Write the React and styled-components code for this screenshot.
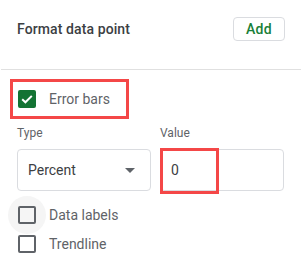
import React from "react";
import styled, { createGlobalStyle } from "styled-components";

const Global = createGlobalStyle`
  html, body { margin: 0; padding: 0; background: #fff; }
  body { font-family: Roboto, "Noto Sans", Arial, sans-serif; color: #3c4043; }
`;

const Panel = styled.div`
  width: 301px;
  height: 278px;
  box-sizing: border-box;
  background: #fff;
`;

const Header = styled.div`
  height: 69px;
  box-sizing: border-box;
  padding: 17px 16px 0 17px;
  display: flex;
  justify-content: space-between;
  align-items: flex-start;
`;

const Title = styled.div`
  font-size: 14px;
  font-weight: 500;
  line-height: 24px;
  color: #3c4043;
  letter-spacing: 0.1px;
`;

const AddButton = styled.button`
  width: 52px;
  height: 24px;
  box-sizing: border-box;
  border: 1px solid #dadce0;
  border-radius: 4px;
  background: #fff;
  color: #188038;
  font-family: Roboto, Arial, sans-serif;
  font-size: 14px;
  font-weight: 500;
  padding: 0;
  letter-spacing: 0.3px;
`;

const Divider = styled.div`
  height: 1px;
  background: #e0e0e0;
  margin-left: 1px;
`;

const Highlight = styled.div`
  border: 3px solid #f44747;
  box-sizing: border-box;
`;

const ErrorBarsBox = styled(Highlight)`
  margin: 9px 0 0 10px;
  width: 119px;
  height: 40px;
  display: flex;
  align-items: center;
  padding-left: 5px;
`;

const CheckRow = styled.div`
  display: flex;
  align-items: center;
  gap: 13px;
  height: ${(p) => p.$h || 29}px;
  position: relative;
`;

const Box = styled.div`
  width: 18px;
  height: 18px;
  box-sizing: border-box;
  border-radius: 2px;
  border: 2px solid ${(p) => (p.$checked ? "#137333" : "#5f6368")};
  background: ${(p) => (p.$checked ? "#137333" : "transparent")};
  display: flex;
  align-items: center;
  justify-content: center;
  position: relative;
  z-index: 1;
  flex: none;
`;

const Halo = styled.div`
  position: absolute;
  left: -10px;
  top: 50%;
  width: 38px;
  height: 38px;
  margin-top: -19px;
  border-radius: 50%;
  background: #f5f5f5;
`;

const CheckLabel = styled.span`
  font-size: 14px;
  color: #5f6368;
  position: relative;
  z-index: 1;
`;

const Fields = styled.div`
  display: grid;
  grid-template-columns: 134px 124px;
  column-gap: 9px;
  padding: 6px 0 0 17px;
`;

const FieldLabel = styled.div`
  font-size: 12px;
  line-height: 16px;
  color: #5f6368;
  margin-bottom: 8px;
`;

const FieldBox = styled.div`
  height: 42px;
  box-sizing: border-box;
  border: 1px solid #dadce0;
  border-radius: 4px;
  display: flex;
  align-items: center;
  justify-content: space-between;
  padding: 0 15px 0 10px;
  font-size: 14px;
  color: #3c4043;
  position: relative;
`;

const ValueHighlight = styled(Highlight)`
  position: absolute;
  left: -1px;
  top: -2px;
  width: 59px;
  height: 46px;
`;

const Caret = styled.div`
  width: 0;
  height: 0;
  border-left: 5px solid transparent;
  border-right: 5px solid transparent;
  border-top: 5px solid #5f6368;
`;

const List = styled.div`
  padding: 9px 0 0 18px;
  display: flex;
  flex-direction: column;
`;

const Tick = () => (
  <svg width="14" height="14" viewBox="0 0 14 14">
    <path d="M2.2 7.2 L5.4 10.3 L11.8 3.9" fill="none" stroke="#fff" strokeWidth="2" />
  </svg>
);

export default function App() {
  return (
    <>
      <Global />
      <Panel>
        <Header>
          <Title>Format data point</Title>
          <AddButton>Add</AddButton>
        </Header>
        <Divider />
        <ErrorBarsBox>
          <CheckRow $h={34}>
            <Box $checked>
              <Tick />
            </Box>
            <CheckLabel>Error bars</CheckLabel>
          </CheckRow>
        </ErrorBarsBox>
        <Fields>
          <div>
            <FieldLabel>Type</FieldLabel>
            <FieldBox>
              <span>Percent</span>
              <Caret />
            </FieldBox>
          </div>
          <div>
            <FieldLabel>Value</FieldLabel>
            <FieldBox>
              <span>0</span>
              <ValueHighlight />
            </FieldBox>
          </div>
        </Fields>
        <List>
          <CheckRow>
            <Halo />
            <Box />
            <CheckLabel>Data labels</CheckLabel>
          </CheckRow>
          <CheckRow>
            <Box />
            <CheckLabel>Trendline</CheckLabel>
          </CheckRow>
        </List>
      </Panel>
    </>
  );
}
